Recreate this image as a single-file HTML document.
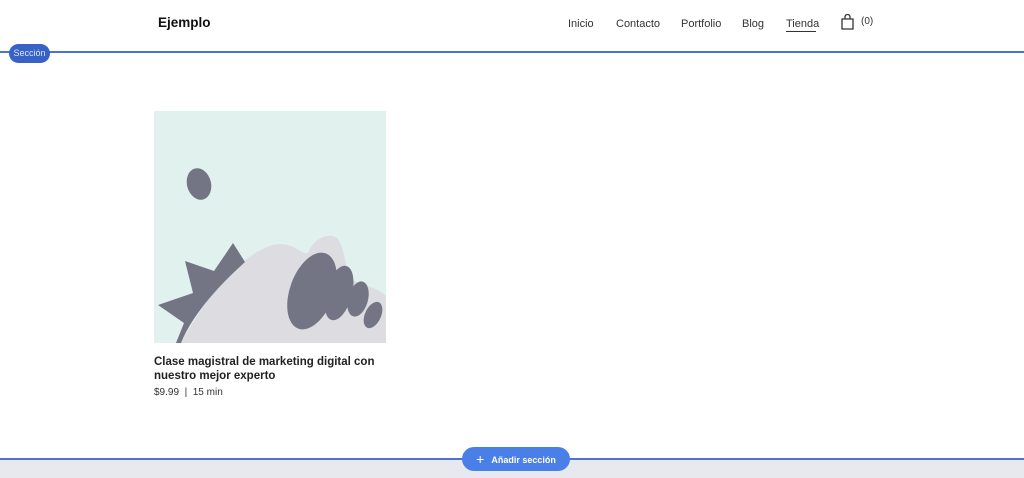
<!DOCTYPE html>
<html><head><meta charset="utf-8"><style>
body{margin:0;width:1024px;height:478px;overflow:hidden;background:#fff;font-family:"Liberation Sans",Arial,sans-serif;position:relative;color:#222}
.logo{position:absolute;left:158px;top:15px;font-size:13.5px;font-weight:bold;color:#111}
.nav{position:absolute;top:18px;font-size:11px;color:#333;font-family:"Liberation Sans",Arial,sans-serif}
.line{position:absolute;left:0;width:1024px;height:2px;background:#4a72d0}
.pill{position:absolute;left:9px;top:44px;width:41px;height:19px;border-radius:10px;background:#3862c8;color:#dfe6f7;font-size:9px;text-align:center;line-height:19px}
.btm{position:absolute;left:0;top:459px;width:1024px;height:19px;background:#e8e9ef}
.add{position:absolute;left:462px;top:447px;width:108px;height:24px;border-radius:12px;background:#4a7fe8;color:#fff;font-size:9px;font-weight:bold;line-height:24px;text-align:center}
</style></head><body>
<div class="logo">Ejemplo</div>
<div class="nav" style="left:568px">Inicio</div>
<div class="nav" style="left:616px">Contacto</div>
<div class="nav" style="left:681px">Portfolio</div>
<div class="nav" style="left:742px">Blog</div>
<div class="nav" style="left:786px">Tienda</div>
<div style="position:absolute;left:786px;top:31px;width:30px;height:1px;background:#333"></div>
<svg style="position:absolute;left:841px;top:14px" width="13" height="16" viewBox="0 0 13 16"><path d="M1 5h11v10H1z M4 5V3a2.5 2.5 0 0 1 5 0v2" fill="none" stroke="#333" stroke-width="1.3"/></svg>
<div class="nav" style="left:861px;top:16px;font-size:10px">(0)</div>
<div class="line" style="top:51px"></div>
<div class="pill">Sección</div>
<svg style="position:absolute;left:154px;top:111px" width="232" height="232" viewBox="0 0 232 232">
<rect width="232" height="232" fill="#e1f2ee"/>
<ellipse cx="45" cy="73" rx="12" ry="16" transform="rotate(-15 45 73)" fill="#747584"/>
<path d="M27 232 C50 190 80 150 113 136 C140 125 150 150 155 140 C160 128 175 120 184 128 C192 140 190 160 200 170 C215 175 228 180 232 185 L232 232 Z" fill="#dcdce1"/>
<path d="M4 194 L39 182 L31 150 L60 160 L79 132 L91 151 C70 170 40 200 27 232 L22 232 L30 212 Z" fill="#747584"/>
<ellipse cx="158" cy="180" rx="22" ry="40" transform="rotate(20 158 180)" fill="#747584"/>
<ellipse cx="185" cy="182" rx="13" ry="28" transform="rotate(15 185 182)" fill="#747584"/>
<ellipse cx="204" cy="188" rx="10" ry="18" transform="rotate(15 204 188)" fill="#747584"/>
<ellipse cx="219" cy="204" rx="8" ry="14" transform="rotate(25 219 204)" fill="#747584"/>
</svg>
<div style="position:absolute;left:154px;top:355px;font-size:11.5px;font-weight:bold;line-height:14px;color:#222">Clase magistral de marketing digital con<br>nuestro mejor experto</div>
<div style="position:absolute;left:154px;top:387px;font-size:10px;color:#333">$9.99 &nbsp;|&nbsp; 15 min</div>
<div class="btm"></div>
<div class="line" style="top:458px;height:1.5px"></div>
<div class="add"><span style="font-size:14px;font-weight:normal;vertical-align:-1px;margin-right:7px">+</span>Añadir sección</div>
</body></html>
